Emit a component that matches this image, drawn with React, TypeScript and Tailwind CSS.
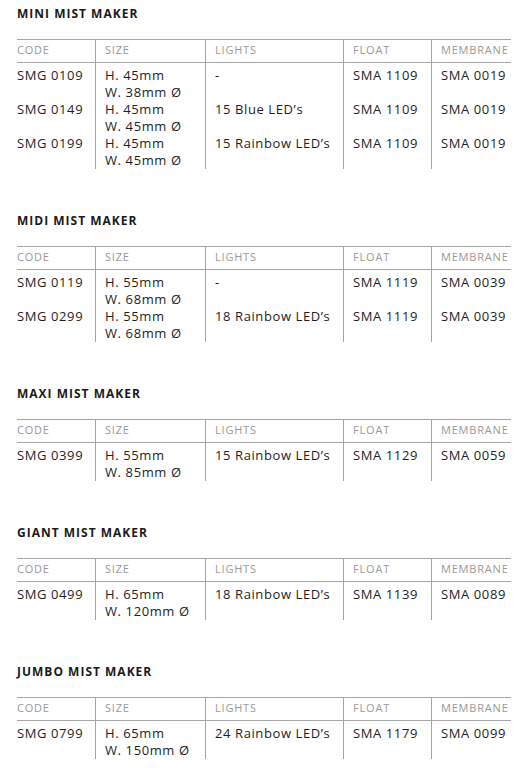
type Item = {
  code: string;
  height: string;
  width: string;
  lights: string;
  float: string;
  membrane: string;
};

type Section = { title: string; items: Item[] };

const sections: Section[] = [
  {
    title: 'MINI MIST MAKER',
    items: [
      { code: 'SMG 0109', height: 'H. 45mm', width: 'W. 38mm Ø', lights: '-', float: 'SMA 1109', membrane: 'SMA 0019' },
      { code: 'SMG 0149', height: 'H. 45mm', width: 'W. 45mm Ø', lights: '15 Blue LED’s', float: 'SMA 1109', membrane: 'SMA 0019' },
      { code: 'SMG 0199', height: 'H. 45mm', width: 'W. 45mm Ø', lights: '15 Rainbow LED’s', float: 'SMA 1109', membrane: 'SMA 0019' },
    ],
  },
  {
    title: 'MIDI MIST MAKER',
    items: [
      { code: 'SMG 0119', height: 'H. 55mm', width: 'W. 68mm Ø', lights: '-', float: 'SMA 1119', membrane: 'SMA 0039' },
      { code: 'SMG 0299', height: 'H. 55mm', width: 'W. 68mm Ø', lights: '18 Rainbow LED’s', float: 'SMA 1119', membrane: 'SMA 0039' },
    ],
  },
  {
    title: 'MAXI MIST MAKER',
    items: [
      { code: 'SMG 0399', height: 'H. 55mm', width: 'W. 85mm Ø', lights: '15 Rainbow LED’s', float: 'SMA 1129', membrane: 'SMA 0059' },
    ],
  },
  {
    title: 'GIANT MIST MAKER',
    items: [
      { code: 'SMG 0499', height: 'H. 65mm', width: 'W. 120mm Ø', lights: '18 Rainbow LED’s', float: 'SMA 1139', membrane: 'SMA 0089' },
    ],
  },
  {
    title: 'JUMBO MIST MAKER',
    items: [
      { code: 'SMG 0799', height: 'H. 65mm', width: 'W. 150mm Ø', lights: '24 Rainbow LED’s', float: 'SMA 1179', membrane: 'SMA 0099' },
    ],
  },
];

const cols = 'grid grid-cols-[78px_110px_138px_88px_80px]';
const line = 'border-l border-[#a6a6a6] pl-[9px]';

function SpecTable({ section }: { section: Section }) {
  return (
    <div className="mb-[44px]">
      <h3 className="mb-[17px] text-[12px] leading-[16px] font-bold tracking-[1px] text-[#1a1a1a]">
        {section.title}
      </h3>

      <div className="w-[494px]">
        {/* Header */}
        <div className={`${cols} border-y border-[#a6a6a6] text-[11px] leading-[14px] font-medium tracking-[0.8px] text-[#999999]`}>
          <div className="pt-[3px] pb-[5px]">CODE</div>
          <div className={`${line} pt-[3px] pb-[5px]`}>SIZE</div>
          <div className={`${line} pt-[3px] pb-[5px]`}>LIGHTS</div>
          <div className={`${line} pt-[3px] pb-[5px]`}>FLOAT</div>
          <div className={`${line} pt-[3px] pb-[5px]`}>MEMBRANE</div>
        </div>

        {/* Rows */}
        {section.items.map((item, i) => {
          const pad = i === 0 ? 'pt-[4px]' : '';
          return (
            <div key={item.code} className={`${cols} text-[13px] leading-[17px] font-medium tracking-[0.6px] text-[#1e1e1e]`}>
              <div className={pad}>{item.code}</div>
              <div className={`${line} ${pad}`}>
                <div>{item.height}</div>
                <div>{item.width}</div>
              </div>
              <div className={`${line} ${pad}`}>{item.lights}</div>
              <div className={`${line} ${pad}`}>{item.float}</div>
              <div className={`${line} ${pad}`}>{item.membrane}</div>
            </div>
          );
        })}
      </div>
    </div>
  );
}

export default function App() {
  return (
    <div className="min-h-screen bg-white pl-[17px] pt-[6px] font-['Open_Sans',sans-serif]">
      {sections.map((s) => (
        <SpecTable key={s.title} section={s} />
      ))}
    </div>
  );
}
